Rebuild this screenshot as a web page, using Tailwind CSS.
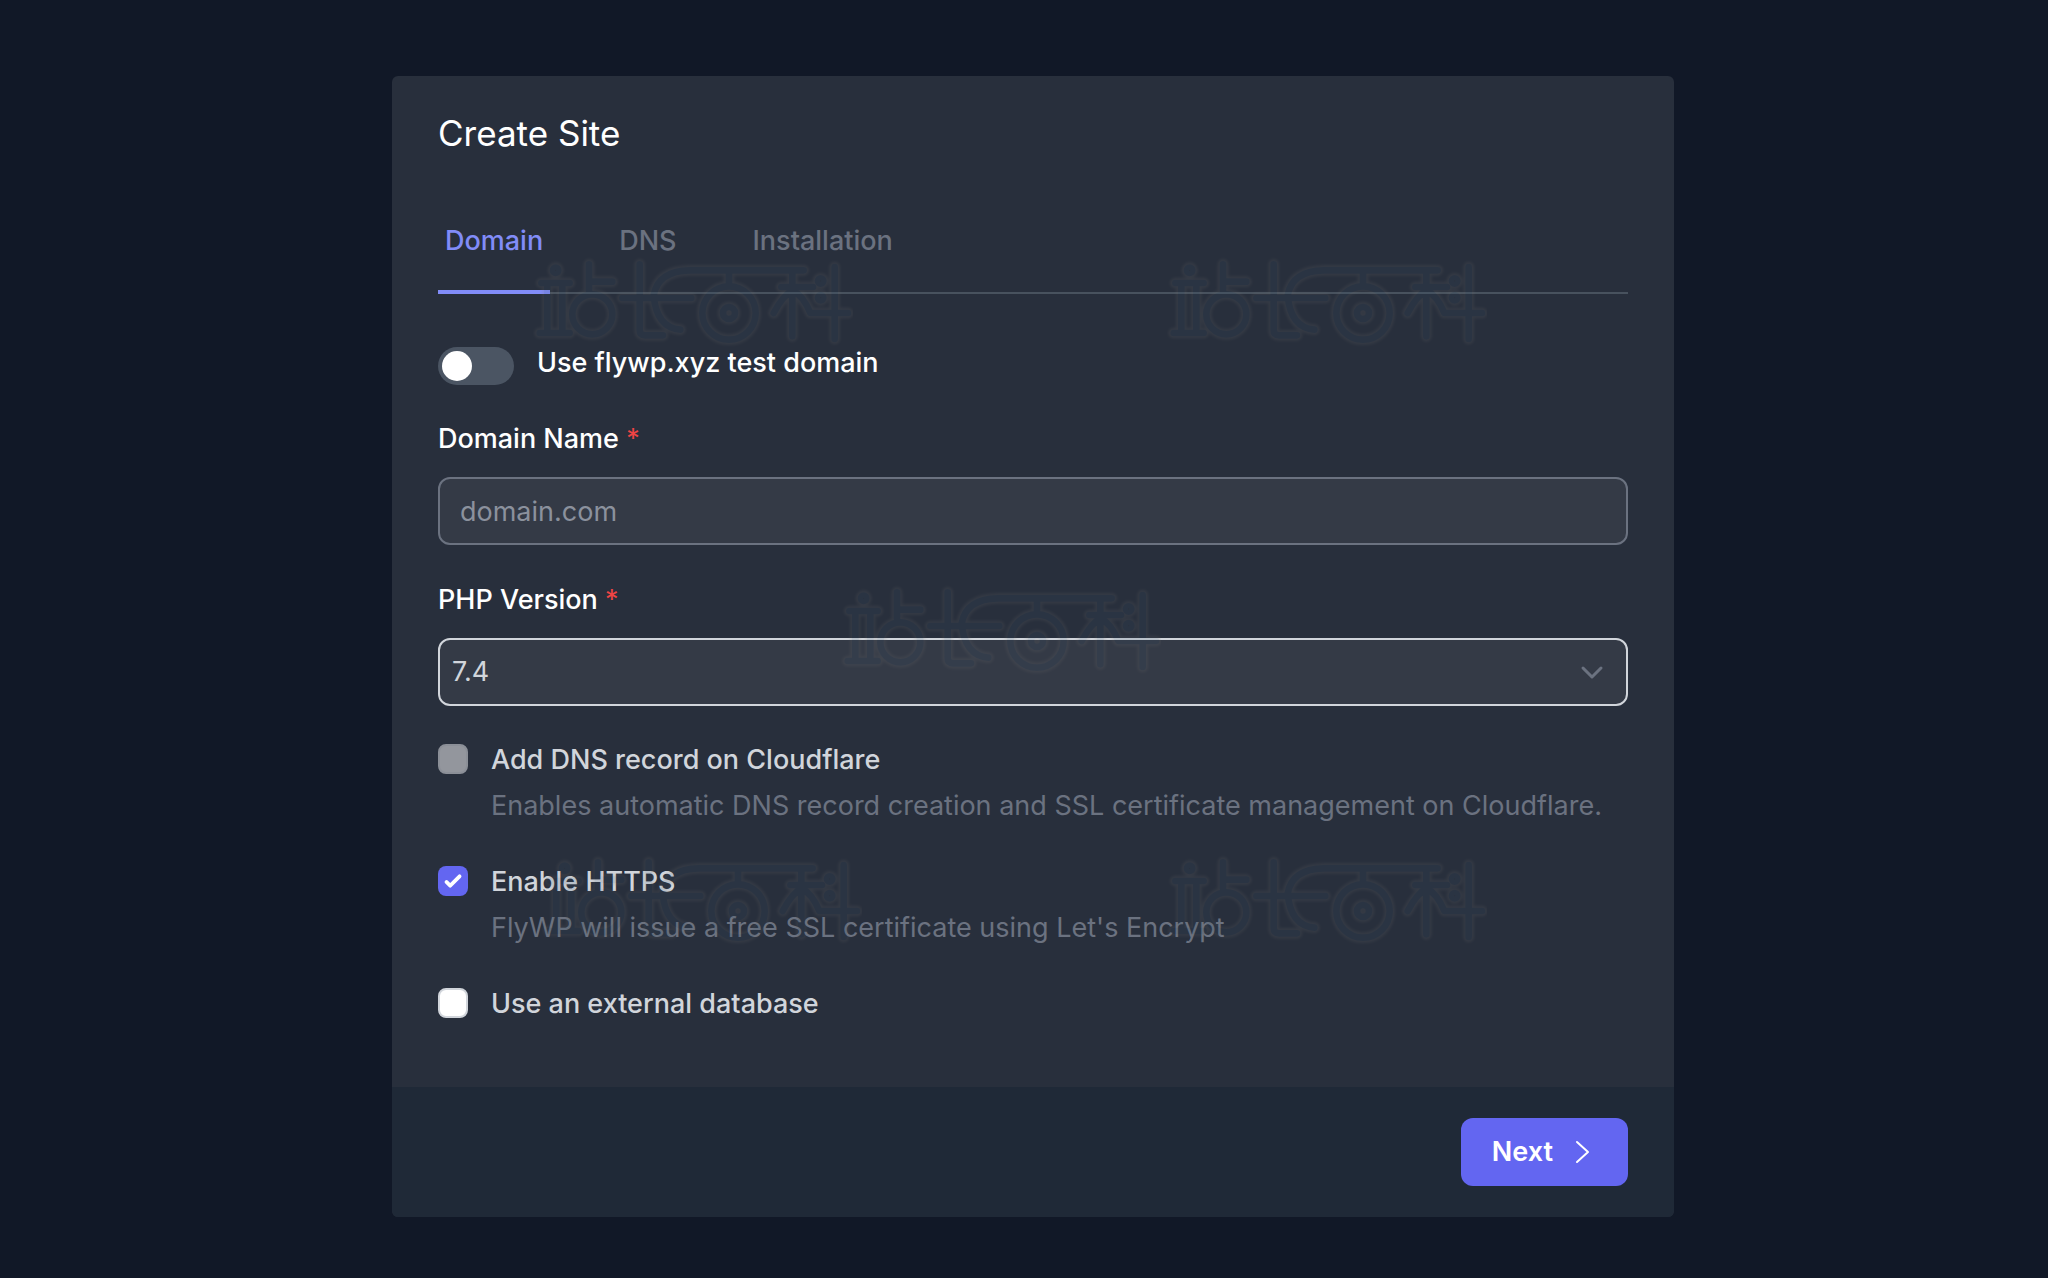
<!DOCTYPE html>
<html lang="en">
<head>
<meta charset="utf-8">
<meta name="viewport" content="width=device-width, initial-scale=1">
<title>Create Site</title>
<script src="https://cdn.jsdelivr.net/npm/@tailwindcss/browser@4"></script>
</head>
<body class="min-h-screen bg-[#111827] pt-19 pb-15 pl-[18px] font-['Inter',sans-serif] text-[27px] leading-9 text-white">

<svg class="hidden" aria-hidden="true">
  <defs>
    <filter id="soft" x="-5%" y="-10%" width="110%" height="120%"><feGaussianBlur stdDeviation="4"/></filter>
    <g id="mark-lines">
      <path d="M125 128H210M143 140V270M188 140V270M120 278H210M268 72V150M268 124H338M420 72V270Q420 285 436 285H490M368 173H575M912 90H570Q475 92 462 165Q470 262 542 268M688 96V136M878 90V288M845 140H940M878 150Q850 165 822 218M878 150Q910 165 932 218H1045M1005 80V296"/>
      <circle cx="168" cy="90" r="8"/>
      <circle cx="278" cy="222" r="60"/>
      <circle cx="688" cy="218" r="80"/>
      <circle cx="688" cy="218" r="18"/>
      <circle cx="963" cy="122" r="8"/>
      <circle cx="963" cy="172" r="8"/>
    </g>
    <symbol id="mark" viewBox="100 50 960 270">
      <g opacity="0.15" fill="none" stroke-linecap="round" stroke-linejoin="round">
        <use href="#mark-lines" stroke="#7c7874" stroke-width="32" filter="url(#soft)"/>
        <use href="#mark-lines" stroke="#3a546c" stroke-width="20"/>
      </g>
    </symbol>
  </defs>
</svg>

<main class="relative mx-auto max-w-[1282px] overflow-hidden rounded-md bg-[#282f3c]">
  <form>
    <div class="px-[46px] pt-[35px] pb-[65px]">
      <h1 class="text-[35px] leading-11">Create Site</h1>

      <nav class="mt-15 flex gap-[62px] border-b-2 border-[#48525e] font-medium text-[#6b7280]" aria-label="Steps">
        <a href="#domain" aria-current="step" class="-mb-0.5 border-b-4 border-[#818cf8] px-[7px] pt-2 pb-[31px] text-[#818cf8]">Domain</a>
        <a href="#dns" class="px-[7px] pt-2 pb-[31px]">DNS</a>
        <a href="#installation" class="px-[7px] pt-2 pb-[31px]">Installation</a>
      </nav>

      <div class="mt-[51px] flex items-start gap-[23px] font-medium">
        <input id="test-domain" type="checkbox" role="switch" class="mt-0.5 h-[38px] w-19 appearance-none rounded-full bg-[#4b5563] before:m-1 before:block before:size-[30px] before:rounded-full before:bg-white">
        <label for="test-domain">Use flywp.xyz test domain</label>
      </div>

      <label for="domain-name" class="mt-9 block font-medium">Domain Name <span class="font-normal text-[#ef4444]">*</span></label>
      <input id="domain-name" type="text" placeholder="domain.com" class="mt-5 block h-17 w-full rounded-xl border-2 border-[#6b7280] bg-[#343a46] px-5 placeholder:text-[#8b919d]">

      <label for="php-version" class="mt-[37px] block font-medium">PHP Version <span class="font-normal text-[#ef4444]">*</span></label>
      <div class="mt-5 grid items-center">
        <select id="php-version" class="col-start-1 row-start-1 h-17 w-full appearance-none rounded-xl border-2 border-[#d1d5db] bg-[#343a46] px-3 text-[#d1d5db]">
          <option>7.4</option>
        </select>
        <svg class="pointer-events-none col-start-1 row-start-1 mr-6 size-6 justify-self-end" viewBox="0 0 24 24" fill="none" stroke="#6b7280" stroke-width="3" stroke-linecap="round" stroke-linejoin="round"><path d="M3 8l9 9 9-9"/></svg>
      </div>

      <div class="mt-9 flex flex-col gap-10 text-[#d1d5db]">
        <div class="flex gap-[23px]">
          <input id="cloudflare" type="checkbox" disabled class="mt-0.5 size-[30px] shrink-0 appearance-none rounded-lg border-2 border-[#8b8f97] bg-[#93969d]">
          <div>
            <label for="cloudflare" class="block font-medium">Add DNS record on Cloudflare</label>
            <p class="mt-2.5 text-[#6b7280]">Enables automatic DNS record creation and SSL certificate management on Cloudflare.</p>
          </div>
        </div>
        <div class="flex gap-[23px]">
          <div class="mt-0.5 grid size-[30px] shrink-0">
            <input id="https" type="checkbox" checked class="col-start-1 row-start-1 size-[30px] appearance-none rounded-lg bg-[#6366f1]">
            <svg class="pointer-events-none col-start-1 row-start-1 size-[30px]" viewBox="0 0 16 16" fill="#fff"><path d="M12.207 4.793a1 1 0 010 1.414l-5 5a1 1 0 01-1.414 0l-2-2a1 1 0 011.414-1.414L6.5 9.086l4.293-4.293a1 1 0 011.414 0z"/></svg>
          </div>
          <div>
            <label for="https" class="block font-medium">Enable HTTPS</label>
            <p class="mt-2.5 text-[#6b7280]">FlyWP will issue a free SSL certificate using Let's Encrypt</p>
          </div>
        </div>
        <div class="flex gap-[23px]">
          <input id="external-db" type="checkbox" class="mt-0.5 size-[30px] shrink-0 appearance-none rounded-lg border-2 border-[#d1d5db] bg-white">
          <label for="external-db" class="font-medium">Use an external database</label>
        </div>
      </div>
    </div>

    <footer class="flex justify-end bg-[#1f2937] px-[46px] py-[31px]">
      <button type="button" class="flex h-17 items-center gap-4 rounded-xl bg-[#6366f1] px-[31px] font-semibold">
        Next
        <svg class="size-7" viewBox="0 0 28 28" fill="none" stroke="#fff" stroke-width="2" stroke-linecap="round" stroke-linejoin="round"><path d="M8 4l11 10-11 10"/></svg>
      </button>
    </footer>
  </form>

  <div class="pointer-events-none" aria-hidden="true">
    <svg class="absolute top-[181px] left-[141px] h-[90px] w-80"><use href="#mark"/></svg>
    <svg class="absolute top-[181px] left-[775px] h-[90px] w-80"><use href="#mark"/></svg>
    <svg class="absolute top-[509px] left-[449px] h-[90px] w-80"><use href="#mark"/></svg>
    <svg class="absolute top-[779px] left-[150px] h-[90px] w-80"><use href="#mark"/></svg>
    <svg class="absolute top-[779px] left-[775px] h-[90px] w-80"><use href="#mark"/></svg>
  </div>
</main>
</body>
</html>
